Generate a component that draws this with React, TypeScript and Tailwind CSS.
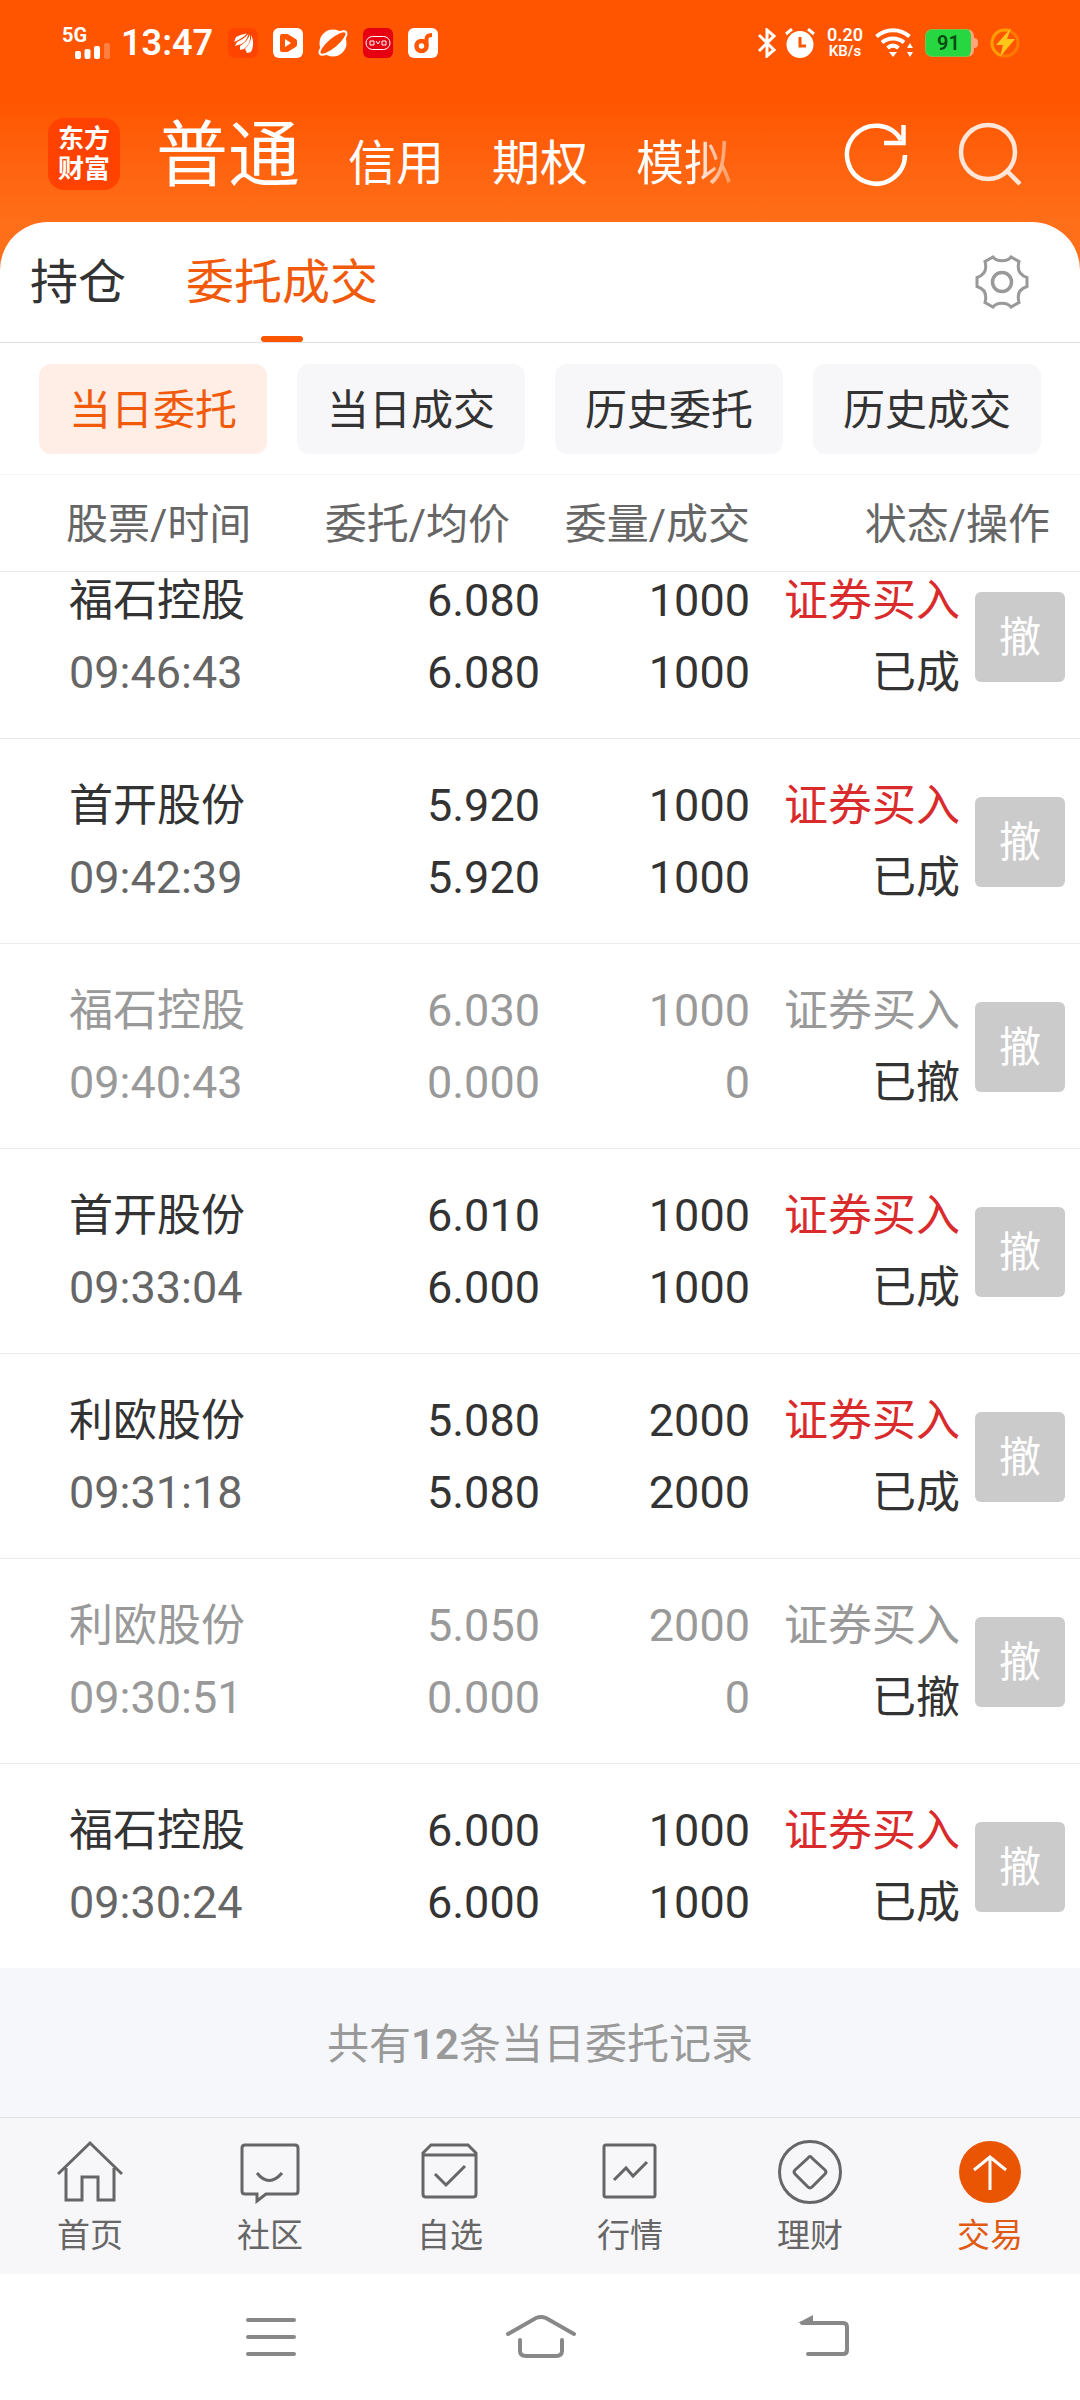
import type { ReactNode } from "react";

type Order = {
  name: string;
  time: string;
  price: string;
  avg: string;
  amount: string;
  done: string;
  status: string;
  cancelled?: boolean;
};

const orders: Order[] = [
  { name: "福石控股", time: "09:46:43", price: "6.080", avg: "6.080", amount: "1000", done: "1000", status: "已成" },
  { name: "首开股份", time: "09:42:39", price: "5.920", avg: "5.920", amount: "1000", done: "1000", status: "已成" },
  { name: "福石控股", time: "09:40:43", price: "6.030", avg: "0.000", amount: "1000", done: "0", status: "已撤", cancelled: true },
  { name: "首开股份", time: "09:33:04", price: "6.010", avg: "6.000", amount: "1000", done: "1000", status: "已成" },
  { name: "利欧股份", time: "09:31:18", price: "5.080", avg: "5.080", amount: "2000", done: "2000", status: "已成" },
  { name: "利欧股份", time: "09:30:51", price: "5.050", avg: "0.000", amount: "2000", done: "0", status: "已撤", cancelled: true },
  { name: "福石控股", time: "09:30:24", price: "6.000", avg: "6.000", amount: "1000", done: "1000", status: "已成" },
];

const filters = ["当日委托", "当日成交", "历史委托", "历史成交"];

const StatusBar = () => {
  return (
    <div className="flex h-[86px] items-center justify-between pr-[60px] pl-[62px] text-white">
      <div className="flex items-center gap-[15px]">
        <div className="flex items-center gap-2.5">
          <div className="relative h-8 w-[49px]">
            <span className="absolute -top-1 left-0 text-[20px] leading-[24px] font-bold">5G</span>
            <svg className="absolute right-0 bottom-0" width="36" height="16" viewBox="0 0 36 16" fill="#fff">
              <rect x="0" y="8" width="6" height="8" rx="2" />
              <rect x="9.500" y="6" width="6" height="10" rx="2" />
              <rect x="19" y="3" width="6" height="13" rx="2" />
              <rect x="29" y="0" width="6" height="16" rx="2" opacity=".25" />
            </svg>
          </div>
          <span className="text-[36px] leading-[36px] font-semibold">13:47</span>
        </div>
        <svg width="30" height="30" viewBox="0 0 30 30">
          <rect width="30" height="30" rx="7" fill="#ff4400" />
          <path
            d="M6 14L8 9Q13 6 19 5.500Q14 11 6 14ZM7 18L9 14Q16 11 20.500 6Q18 16 10 17ZM12 22L12 18Q19 14 22 6.500Q23 16 16 21ZM19 25L17 21Q23 15 23.500 7Q27 17 23 24Z"
            fill="#fff"
          />
        </svg>
        <svg width="30" height="30" viewBox="0 0 30 30">
          <rect width="30" height="30" rx="6" fill="#fff" />
          <path d="M9 8H14L22 13V17L14 22H9Z" fill="#ff5500" stroke="#ff5500" strokeWidth="4" strokeLinejoin="round" />
          <path d="M12 11L18 15L12 19Z" fill="#fff" />
        </svg>
        <svg className="overflow-visible" width="30" height="30" viewBox="0 0 30 30">
          <circle cx="15" cy="15" r="13.500" fill="#fff" />
          <ellipse cx="15" cy="15" rx="17" ry="5.500" fill="#ff5500" stroke="#fff" strokeWidth="2" transform="rotate(-40 15 15)" />
        </svg>
        <svg width="30" height="30" viewBox="0 0 30 30">
          <rect width="30" height="30" rx="6" fill="#e60012" />
          <rect x="3" y="8.500" width="24" height="13" rx="6.500" stroke="#fff" fill="none" />
          <path d="M7 13H11V17H7ZM19 13H23V17H19ZM13 13L15 16L17 13" stroke="#fff" fill="none" />
        </svg>
        <svg width="30" height="30" viewBox="0 0 30 30">
          <rect width="30" height="30" rx="6" fill="#fff" />
          <circle cx="13.500" cy="18" r="5" stroke="#ff5500" strokeWidth="4.500" fill="none" />
          <path d="M18.500 18V11Q18.500 7 24 7" stroke="#ff5500" strokeWidth="4" fill="none" />
        </svg>
      </div>
      <div className="flex items-center gap-3">
        <div className="flex items-center gap-2">
          <svg width="20" height="30" viewBox="0 0 20 30" fill="none" stroke="#fff" strokeWidth="3">
            <path d="M2 7L17 22L10 28V2L17 8L2 23" />
          </svg>
          <svg width="30" height="30" viewBox="0 0 30 30" fill="none">
            <circle cx="15" cy="16.500" r="13.500" fill="#fff" />
            <path d="M1 6L7 1M29 6L23 1" stroke="#fff" strokeWidth="3" />
            <path d="M15 9V18H21" stroke="#ff5500" strokeWidth="3" />
          </svg>
        </div>
        <div className="flex flex-col items-center font-semibold">
          <span className="text-[18px] leading-[16px]">0.20</span>
          <span className="text-[15px] leading-[16px]">KB/s</span>
        </div>
        <svg width="38" height="30" viewBox="0 0 38 30" fill="none" stroke="#fff" strokeWidth="4">
          <path d="M1.500 8.500C11 0 25 0 34.500 8.500M7 14.500C13 9 23 9 29 14.500M12.500 20C16 17 20 17 23.500 20" />
          <path d="M14 24L18 29L22 24Z" fill="#fff" stroke="none" />
          <path d="M35 15L38 20H32ZM35 29L32 24H38Z" fill="#fff" stroke="none" />
        </svg>
        <div className="flex items-center">
          <div className="flex h-7 w-[49px] items-center justify-center rounded-[7px] border border-r-3 border-[#7cc04a] border-r-[#ffa57a] bg-[#27d741] text-[20px] font-semibold text-[#0b4a12]">
            91
          </div>
          <span className="h-2.5 w-1 rounded-r bg-[#ffa57a]" />
        </div>
        <svg width="30" height="30" viewBox="0 0 30 30">
          <circle cx="15" cy="15" r="13" fill="none" stroke="#ff7a00" strokeWidth="3" />
          <path d="M20 3A13 13 0 0 0 10 27" fill="none" stroke="#ff9c00" strokeWidth="3" />
          <path d="M21 0L6 17H13L10 29L25 11H17Z" fill="#ffc61a" />
        </svg>
      </div>
    </div>
  );
};

const Header = () => {
  return (
    <header className="bg-linear-to-b from-[#ff5500] from-45% to-[#ff6e18]">
      <StatusBar />
      <div className="flex h-[136px] items-center justify-between pr-[57px] pl-12 text-white">
        <div className="flex items-center gap-9">
          <div className="flex size-[72px] flex-col items-center justify-center rounded-2xl bg-[#ff4200] text-[26px] leading-[30px] font-bold">
            <span>东方</span>
            <span>财富</span>
          </div>
          <nav className="flex items-baseline gap-12 pt-3 text-[48px] leading-[72px]">
            <a href="#putong" className="text-[72px]">普通</a>
            <a href="#xinyong">信用</a>
            <a href="#qiquan">期权</a>
            <a href="#moni" className="bg-linear-to-r from-white from-60% to-white/30 bg-clip-text text-transparent">模拟</a>
          </nav>
        </div>
        <div className="flex items-center gap-12">
          <button aria-label="刷新">
            <svg width="66" height="66" viewBox="0 0 66 66" fill="none" stroke="#fff" strokeWidth="4.500">
              <path d="M62 34A29 29 0 1 1 58 19" />
              <path d="M60.500 4V22H41" />
            </svg>
          </button>
          <button aria-label="搜索">
            <svg width="66" height="66" viewBox="0 0 66 66" fill="none" stroke="#ffe6d8" strokeWidth="4.500">
              <circle cx="31" cy="31" r="27" />
              <path d="M50 50L63 63" />
            </svg>
          </button>
        </div>
      </div>
    </header>
  );
};

const Tabs = () => {
  return (
    <div className="bg-[#ff6e18]">
      <div className="flex h-[121px] items-stretch justify-between rounded-t-[48px] border-b border-[#e0e0e0] bg-white pr-[51px] pl-[30px]">
        <nav className="flex gap-[60px] text-[48px] text-[#333]">
          <a href="#chicang" className="flex items-center pt-0.5">持仓</a>
          <a href="#weituo" className="relative flex items-center pt-0.5 text-[#f05a0a]">
            委托成交
            <span className="absolute bottom-0 left-1/2 h-1.5 w-[42px] -translate-x-1/2 rounded-full bg-[#fa5600]" />
          </a>
        </nav>
        <button aria-label="设置">
          <svg width="54" height="54" viewBox="0 0 54 54" fill="none" stroke="#999" strokeWidth="3">
            <path d="M18 2L10 6.500C12 14 10 20 2 22.500V31.500C10 34 12 40 10 47.500L18 52C22 47 32 47 36 52L44 47.500C42 40 44 34 52 31.500V22.500C44 20 42 14 44 6.500L36 2C32 7 22 7 18 2Z" />
            <circle cx="27" cy="27" r="9.500" strokeWidth="3.500" />
          </svg>
        </button>
      </div>
    </div>
  );
};

const TwoLines = ({ top, bottom }: { top: ReactNode; bottom: ReactNode }) => {
  return (
    <div className="flex flex-col gap-4">
      <span>{top}</span>
      <span>{bottom}</span>
    </div>
  );
};

const OrderRow = ({ order }: { order: Order }) => {
  const off = order.cancelled;
  return (
    <tr
      className={`border-b border-[#ebebeb] last:border-b-0 [&>td]:pt-[39px] [&>td]:pb-[37px] first:[&>td]:pt-px ${
        off ? "text-[#999]" : "text-[#333]"
      }`}
    >
      <td className="pl-[69px]">
        <TwoLines
          top={order.name}
          bottom={<span className={off ? "text-[45px]" : "text-[45px] text-[#666]"}>{order.time}</span>}
        />
      </td>
      <td className="text-right text-[45px]">
        <TwoLines top={order.price} bottom={order.avg} />
      </td>
      <td className="text-right text-[45px]">
        <TwoLines top={order.amount} bottom={order.done} />
      </td>
      <td className="text-right">
        <TwoLines
          top={<span className={off ? "" : "text-[#d92b2b]"}>证券买入</span>}
          bottom={<span className="text-[#333]">{order.status}</span>}
        />
      </td>
      <td className="pr-[15px]">
        <button className="ml-auto flex size-[90px] items-center justify-center rounded-md bg-[#cbcbcb] pt-0.5 text-[42px] text-white">
          撤
        </button>
      </td>
    </tr>
  );
};

const navItems = [
  {
    label: "首页",
    icon: (
      <>
        <path d="M1 34L33 3L65 34" />
        <path d="M9 28V60H25V37H41V60H57V28" />
      </>
    ),
  },
  {
    label: "社区",
    icon: (
      <>
        <path d="M8 5H58Q61 5 61 8V51Q61 54 58 54H29L20 61V54H8Q5 54 5 51V8Q5 5 8 5Z" />
        <path d="M20 33Q32 48 45 33" strokeWidth="3" />
      </>
    ),
  },
  {
    label: "自选",
    icon: (
      <>
        <path d="M6 13L14 5H51L59 13V54Q59 57 56 57H9Q6 57 6 54ZM6 15H59" />
        <path d="M18 34L29 45L48 26" strokeWidth="3" />
      </>
    ),
  },
  {
    label: "行情",
    icon: (
      <>
        <rect x="7" y="5" width="51" height="52" rx="2" />
        <path d="M17 40L29 28L36 36L50 22" strokeWidth="3" />
      </>
    ),
  },
  {
    label: "理财",
    icon: (
      <>
        <circle cx="33" cy="32" r="30.500" />
        <path d="M31 18Q33 15 35 18L48 30Q50 32 48 34L35 47Q33 49 31 47L18 34Q16 32 18 30Z" />
      </>
    ),
  },
  {
    label: "交易",
    active: true,
    icon: (
      <>
        <circle cx="33" cy="32" r="31" fill="#ea5504" stroke="none" />
        <path d="M33 50V17M17 30L33 17L49 30" stroke="#fff" strokeWidth="3" />
      </>
    ),
  },
];

const BottomNav = () => {
  return (
    <nav className="grid h-[157px] grid-cols-6 border-t border-[#e0e0e0] bg-[#f7f7fa]">
      {navItems.map((item) => (
        <a
          key={item.label}
          href={`#${item.label}`}
          className={`flex flex-col items-center pt-[22px] text-[33px] leading-[48px] ${
            item.active ? "text-[#e05a14]" : "text-[#666]"
          }`}
        >
          <svg width="66" height="64" viewBox="0 0 66 64" fill="none" stroke="#666" strokeWidth="3">
            {item.icon}
          </svg>
          <span className="mt-2">{item.label}</span>
        </a>
      ))}
    </nav>
  );
};

const SystemNav = () => {
  return (
    <div className="grid h-[126px] grid-cols-3 place-items-center bg-white px-[12.5%]">
      <button aria-label="菜单">
        <svg width="96" height="48" viewBox="0 0 96 48" fill="none" stroke="#888" strokeWidth="4" strokeLinecap="round">
          <path d="M26 7H72M26 24H72M26 41H72" />
        </svg>
      </button>
      <button aria-label="主屏幕">
        <svg width="96" height="48" viewBox="0 0 96 48" fill="none" stroke="#888" strokeWidth="4" strokeLinecap="round">
          <path d="M16 21L44 5Q49 3 54 5L82 21" />
          <path d="M28 27V38Q28 43 34 43H64Q70 43 70 38V27" />
        </svg>
      </button>
      <button aria-label="返回">
        <svg width="96" height="48" viewBox="0 0 96 48" fill="none" stroke="#888" strokeWidth="4" strokeLinecap="round">
          <path d="M40 10H81Q85 10 85 14V37Q85 41 81 41H46" />
          <path d="M36 10L51 2V10Z" fill="#888" stroke="none" />
        </svg>
      </button>
    </div>
  );
};

export default function App() {
  return (
    <div className="flex min-h-screen flex-col bg-white font-[Roboto,'Noto_Sans_CJK_SC',sans-serif]">
      <Header />
      <Tabs />
      <div className="grid grid-cols-4 gap-[30px] border-b border-[#f5f5f5] px-[39px] pt-[21px] pb-5">
        {filters.map((f, i) => (
          <button
            key={f}
            className={`h-[90px] rounded-xl pt-0.5 text-[42px] ${
              i === 0 ? "bg-[#ffeee6] text-[#f05a0a]" : "bg-[#f7f7fa] text-[#333]"
            }`}
          >
            {f}
          </button>
        ))}
      </div>
      <table className="w-full table-fixed border-collapse text-[44px] leading-[56px]">
        <colgroup>
          <col className="w-1/4" />
          <col className="w-1/4" />
          <col className="w-[210px]" />
          <col />
          <col className="w-[120px]" />
        </colgroup>
        <thead>
          <tr className="h-24 border-b border-[#e8e8e8] text-[42px] text-[#666] [&>th]:pt-1 [&>th]:font-normal">
            <th className="pl-[66px] text-left">股票/时间</th>
            <th className="pr-[30px] text-right">委托/均价</th>
            <th className="text-right">委量/成交</th>
            <th colSpan={2} className="pr-[30px] text-right">状态/操作</th>
          </tr>
        </thead>
        <tbody>
          {orders.map((o) => (
            <OrderRow key={o.time} order={o} />
          ))}
        </tbody>
      </table>
      <div className="flex grow items-center justify-center bg-[#f6f7fa] pt-1 text-[42px] text-[#999]">
        <p>
          共有<b className="font-semibold">12</b>条当日委托记录
        </p>
      </div>
      <BottomNav />
      <SystemNav />
    </div>
  );
}
